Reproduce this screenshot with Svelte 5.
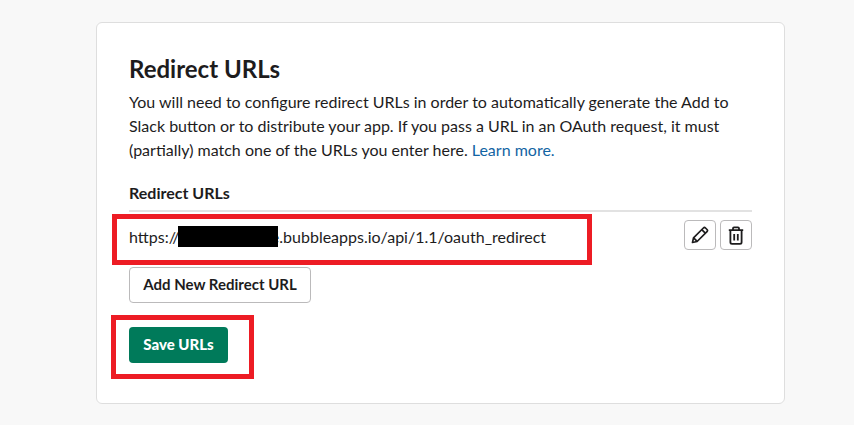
<script>
  let urls = ["https://xxxxxxxxxxxie.bubbleapps.io/api/1.1/oauth_redirect"];
</script>

<main class="page">
  <section class="card">
    <h2>Redirect URLs</h2>
    <p>
      You will need to configure redirect URLs in order to automatically generate the Add to
      Slack button or to distribute your app. If you pass a URL in an OAuth request, it must
      (partially) match one of the URLs you enter here. <a href="#learn">Learn more.</a>
    </p>
    <h3>Redirect URLs</h3>
    {#each urls as url}
      <div class="row">
        <span class="url">{url}</span>
        <div class="actions">
          <button class="icon" aria-label="Edit">
            <svg width="18" height="18" viewBox="0 0 18 18" fill="none" stroke="#1d1c1d" stroke-width="1.7" stroke-linejoin="round">
              <path d="M1.5 16.5l1-4.6L12.4 2a1.5 1.5 0 0 1 2.1 0l1.5 1.5a1.5 1.5 0 0 1 0 2.1L6.1 15.5z" />
              <path d="M2.6 11.8l3.6 3.6M10.8 3.7l3.5 3.5" />
            </svg>
          </button>
          <button class="icon" aria-label="Delete">
            <svg width="18" height="19" viewBox="0 0 18 19" fill="none" stroke="#1d1c1d" stroke-width="1.8" stroke-linejoin="round">
              <path d="M1.8 4.2h14.4M6 4V2.4a1 1 0 0 1 1-1h4a1 1 0 0 1 1 1V4" />
              <path d="M3.4 4.4v11.8a1.6 1.6 0 0 0 1.6 1.6h8a1.6 1.6 0 0 0 1.6-1.6V4.4" />
              <path d="M7.2 8v6.5M10.8 8v6.5" />
            </svg>
          </button>
        </div>
      </div>
    {/each}
    <button class="add">Add New Redirect URL</button>
    <button class="save">Save URLs</button>
  </section>

  <!-- annotations drawn over the screenshot -->
  <div class="redact"></div>
  <div class="mark mark-url"></div>
  <div class="mark mark-save"></div>
</main>

<style>
  :global(body) {
    margin: 0;
    background: #f8f8f8;
    font-family: Lato, "Open Sans", sans-serif;
    color: #1d1c1d;
  }

  .page {
    position: relative;
    width: 854px;
    height: 425px;
    overflow: hidden;
    padding: 22px 69px 0 96px;
    box-sizing: border-box;
  }

  .card {
    width: 689px;
    height: 382px;
    box-sizing: border-box;
    padding: 29px 32px 0 32px;
    background: #fff;
    border: 1px solid #dedede;
    border-radius: 6px;
  }

  h2 {
    margin: 0 0 5px;
    font-size: 24px;
    line-height: 33px;
    font-weight: 700;
  }

  p {
    margin: 0 0 21px;
    font-size: 16px;
    line-height: 24px;
    color: #1d1c1d;
  }

  a {
    color: #1264a3;
    text-decoration: none;
  }

  h3 {
    margin: 0;
    padding-bottom: 7px;
    font-size: 16px;
    line-height: 20px;
    font-weight: 700;
    border-bottom: 2px solid #e2e2e2;
  }

  .row {
    display: flex;
    justify-content: space-between;
    align-items: flex-start;
    height: 55px;
    padding-top: 9px;
    box-sizing: border-box;
  }

  .url {
    font-size: 16px;
    line-height: 32px;
  }

  .actions {
    display: flex;
    gap: 4px;
    margin-top: -1px;
  }

  button {
    font-family: inherit;
    cursor: pointer;
    box-sizing: border-box;
  }

  .icon {
    display: flex;
    align-items: center;
    justify-content: center;
    width: 32px;
    height: 30px;
    padding: 0;
    background: #fff;
    border: 1px solid #bbbabb;
    border-radius: 4px;
  }

  .add {
    display: block;
    width: 182px;
    height: 36px;
    padding: 0 0 2px;
    font-size: 15px;
    font-weight: 700;
    color: #1d1c1d;
    background: #fff;
    border: 1px solid #bbbabb;
    border-radius: 4px;
  }

  .save {
    display: block;
    width: 99px;
    height: 36px;
    margin-top: 24px;
    padding: 0 0 2px;
    font-size: 15px;
    font-weight: 900;
    color: #fff;
    background: #007a5a;
    border: none;
    border-radius: 4px;
  }

  .redact {
    position: absolute;
    left: 178px;
    top: 226px;
    width: 100px;
    height: 21px;
    background: #000;
  }

  .mark {
    position: absolute;
    box-sizing: border-box;
    border: 5px solid #ed1c24;
  }

  .mark-url {
    left: 112px;
    top: 214px;
    width: 480px;
    height: 51px;
  }

  .mark-save {
    left: 111px;
    top: 315px;
    width: 143px;
    height: 64px;
  }
</style>
